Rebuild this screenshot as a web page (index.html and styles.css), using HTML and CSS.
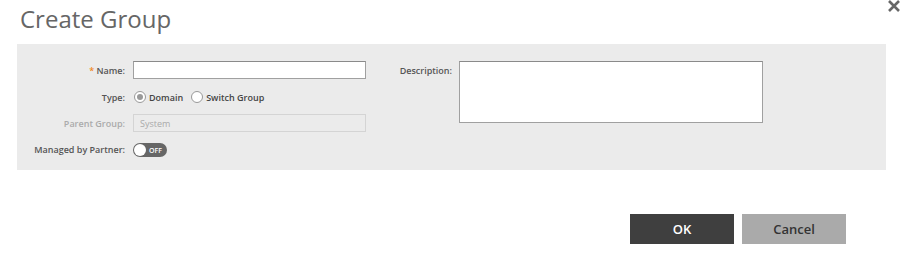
FILE: index.html
```html
<!DOCTYPE html>
<html lang="en">
	<head>
		<meta charset="utf-8">
		<title>Create Group</title>
		<link rel="stylesheet" href="styles.css">
	</head>
	<body>
		<div class="dialog">
			<svg class="close" width="14" height="14" viewBox="0 0 14 14">
				<path d="M2 1 L12 11 M12 1 L2 11" stroke="#666" stroke-width="2.6" fill="none"/>
			</svg>
			<h1 class="title">Create Group</h1>
			<div class="panel">
				<div class="col">
					<div class="row">
						<label class="label"><span class="req">*</span> Name:</label>
						<div class="field"><input class="input" type="text"></div>
					</div>
					<div class="row row-type">
						<label class="label">Type:</label>
						<div class="field radios">
							<span class="radio checked"></span><span class="radio-text">Domain</span>
							<span class="radio"></span><span class="radio-text">Switch Group</span>
						</div>
					</div>
					<div class="row">
						<label class="label disabled">Parent Group:</label>
						<div class="field"><input class="input" type="text" value="System" disabled></div>
					</div>
					<div class="row">
						<label class="label">Managed by Partner:</label>
						<div class="field">
							<span class="toggle"><span class="knob"></span><span class="toggle-text">OFF</span></span>
						</div>
					</div>
				</div>
				<div class="col right">
					<label class="label desc-label">Description:</label>
					<textarea class="textarea"></textarea>
				</div>
			</div>
			<div class="actions">
				<button class="btn ok">OK</button>
				<button class="btn cancel">Cancel</button>
			</div>
		</div>
	</body>
</html>
```

FILE: styles.css
```css
body {
	margin: 0;
	background: #fff;
	font-family: 'Open Sans', 'DejaVu Sans', sans-serif;
	color: #555;
}

.dialog {
	width: 900px;
	height: 254px;
	overflow: hidden;
}

.close {
	position: absolute;
	top: 0;
	left: 887px;
}

.title {
	margin: 0;
	padding: 2px 0 0 20px;
	height: 42px;
	font-size: 24px;
	font-weight: normal;
	line-height: 34px;
	color: #666;
}

/* Form panel */

.panel {
	margin-left: 17px;
	width: 869px;
	height: 126px;
	box-sizing: border-box;
	padding-top: 17px;
	background: #ebebeb;
	display: flex;
}

.col {
	display: flex;
	flex-direction: column;
	gap: 8px;
}

.row {
	display: flex;
	align-items: center;
	height: 18px;
}

.row-type {
	margin-top: 1px;
}

.label {
	width: 108px;
	padding-right: 8px;
	text-align: right;
	font-size: 9px;
	font-weight: 600;
	color: #555;
	white-space: nowrap;
}

.label.disabled {
	color: #aaa;
}

.req {
	color: #f08a24;
}

.field {
	display: flex;
	align-items: center;
}

.input {
	width: 233px;
	height: 18px;
	box-sizing: border-box;
	margin: 0;
	border: 1px solid #a0a0a0;
	border-top-color: #8a8a8a;
	background: #fff;
	font-family: inherit;
	font-size: 9px;
	padding: 0 6px;
}

.input:disabled {
	border-color: #d4d4d4;
	background: #ebebeb;
	color: #aaa;
}

.radio {
	width: 12px;
	height: 12px;
	border: 1px solid #999;
	border-radius: 50%;
	background: #fff;
	box-sizing: border-box;
	margin: 0 3px 0 1px;
	position: relative;
}

.radio.checked::after {
	content: '';
	position: absolute;
	left: 2px;
	top: 2px;
	width: 6px;
	height: 6px;
	border-radius: 50%;
	background: #999;
}

.radio-text {
	font-size: 9px;
	font-weight: 600;
	color: #444;
	margin-right: 7px;
}

.toggle {
	width: 34px;
	height: 14px;
	border-radius: 7px;
	background: #666;
	display: flex;
	align-items: center;
	margin-top: 2px;
}

.knob {
	width: 12px;
	height: 12px;
	margin-left: 1px;
	border-radius: 50%;
	background: #fff;
}

.toggle-text {
	font-size: 7px;
	font-weight: 600;
	color: #fff;
	margin-left: 3px;
}

.right {
	flex-direction: row;
	gap: 0;
}

.desc-label {
	width: 86px;
	padding-right: 7px;
	box-sizing: border-box;
	margin-left: 7px;
	line-height: 20px;
}

.textarea {
	width: 304px;
	height: 62px;
	box-sizing: border-box;
	margin: 0;
	border: 1px solid #a0a0a0;
	border-top-color: #8a8a8a;
	resize: none;
}

/* Buttons */

.actions {
	display: flex;
	justify-content: flex-end;
	gap: 8px;
	margin-top: 44px;
	padding-right: 54px;
}

.btn {
	width: 104px;
	height: 30px;
	border: 0;
	font-family: inherit;
	font-size: 13px;
	font-weight: 600;
}

.ok {
	background: #3f3f3f;
	color: #fff;
}

.cancel {
	background: #aaa;
	color: #333;
}
```
